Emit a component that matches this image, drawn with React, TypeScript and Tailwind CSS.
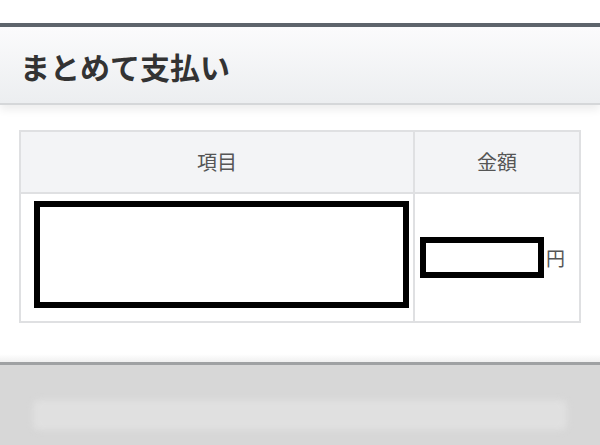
export default function App() {
  return (
    <div
      className="w-[600px] h-[445px] bg-white flex flex-col overflow-hidden"
      style={{ fontFamily: '"Noto Sans CJK JP", "Noto Sans", sans-serif' }}
    >
      <div className="h-[23px] shrink-0" />

      {/* Page title bar */}
      <div className="relative shrink-0 h-[82px] border-t-4 border-b-2 border-t-[#5d646b] border-b-[#d5d7d9] bg-gradient-to-b from-[#fbfbfc] to-[#eceef0] flex items-center px-[20px] shadow-[0_5px_8px_rgba(0,0,0,0.07)]">
        <h1 className="text-[30px] font-bold text-[#333] leading-none pt-[2px]">まとめて支払い</h1>
      </div>

      {/* Summary table */}
      <div className="px-[19px] pt-[25px] shrink-0">
        <table className="w-[562px] border-collapse table-fixed">
          <thead>
            <tr className="h-[62px] bg-[#f3f4f6]">
              <th className="w-[394px] border-2 border-[#dfe0e2] text-[20px] font-normal text-[#555]">項目</th>
              <th className="border-2 border-[#dfe0e2] text-[20px] font-normal text-[#555]">金額</th>
            </tr>
          </thead>
          <tbody>
            <tr className="h-[129px]">
              <td className="border-2 border-[#dfe0e2] pl-[13px] pr-[4px] pb-[7px]">
                <div className="h-[107px] w-[375px] border-[6px] border-black bg-white" />
              </td>
              <td className="border-2 border-[#dfe0e2] pl-[5px]">
                <div className="flex items-center">
                  <div className="h-[41px] w-[124px] border-[6px] border-black bg-white" />
                  <span className="ml-[2px] text-[19px] text-[#555] leading-none">円</span>
                </div>
              </td>
            </tr>
          </tbody>
        </table>
      </div>

      <div className="flex-1 bg-gradient-to-b from-white from-80% to-[#f0f0f0]" />

      {/* Bottom toolbar */}
      <div className="h-[83px] shrink-0 border-t-[3px] border-[#9fa1a3] bg-[#d7d7d7] px-[33px] pt-[35px]">
        <div className="h-[30px] rounded-[6px] bg-[#e0e0e0] blur-[3px]" />
      </div>
    </div>
  );
}
